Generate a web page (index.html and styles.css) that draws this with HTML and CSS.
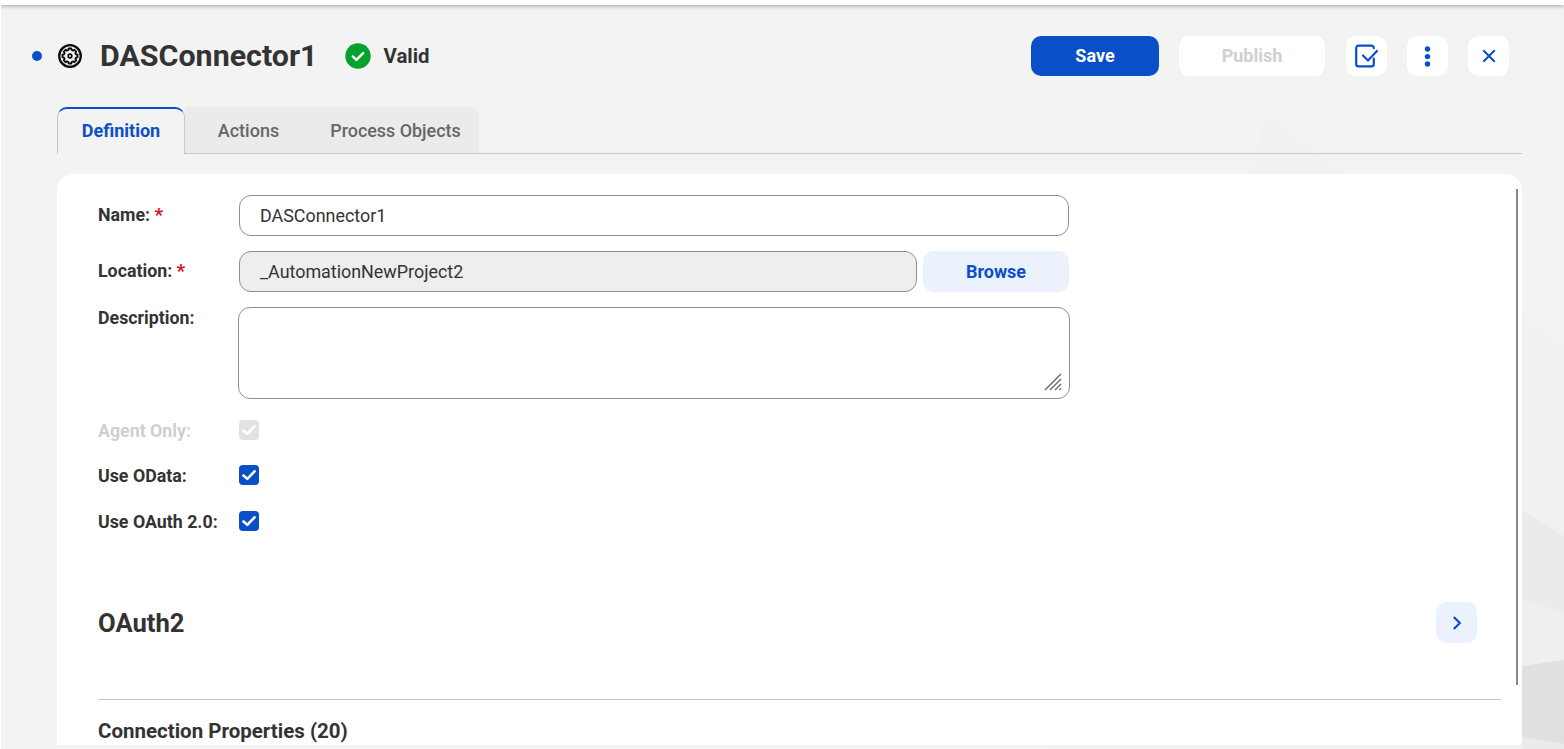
FILE: index.html
```html
<!DOCTYPE html>
<html lang="en">
<head>
<meta charset="utf-8">
<title>DASConnector1</title>
<link rel="stylesheet" href="styles.css">
</head>
<body>
<svg class="backdrop" viewBox="0 0 1564 749" width="1564" height="749" aria-hidden="true">
  <polygon points="1268,113 1564,347 1564,749 1049,749" fill="#f1f1f1"/>
  <polygon points="1522,510 1564,536 1564,613 1522,600" fill="#ebebeb"/>
  <polygon points="1522,600 1564,613 1564,660 1522,666" fill="#efefef"/>
  <polygon points="1522,666 1564,660 1564,744 1522,737" fill="#e0e0e0"/>
  <polygon points="1522,737 1564,744 1564,749 1522,749" fill="#ebebeb"/>
</svg>
<div class="edge-tab"></div>
<div class="page">
  <header class="header">
    <div class="title-group">
      <span class="dot"></span>
      <svg class="gear" viewBox="0 0 24 24" width="24" height="24" fill="none" stroke="#0c0c0c" aria-hidden="true">
        <circle cx="12" cy="12" r="10.800" stroke-width="2.300"/>
        <path stroke-width="1.900" stroke-linejoin="round" d="M10.700 6h2.600l.4 1.500 1.300.6 1.400-.8 1.800 1.800-.8 1.400.6 1.300 1.500.4v2.600l-1.500.4-.6 1.300.8 1.400-1.800 1.800-1.400-.8-1.300.6-.4 1.500h-2.600l-.4-1.500-1.300-.6-1.400.8-1.800-1.800.8-1.400-.6-1.300-1.500-.4v-2.600l1.500-.4.6-1.300-.8-1.400 1.800-1.800 1.400.8 1.300-.6z" transform="translate(0 -1.500)"/>
        <circle cx="12" cy="12" r="1.800" stroke-width="1.700"/>
      </svg>
      <h1 class="title">DASConnector1</h1>
      <svg class="valid-icon" viewBox="0 0 26 26" width="26" height="26" aria-hidden="true">
        <circle cx="13" cy="13" r="12.700" fill="#04a12e"/>
        <path d="M7.800 13.400l3.600 3.500 6.800-6.800" fill="none" stroke="#fff" stroke-width="2.400" stroke-linecap="round" stroke-linejoin="round"/>
      </svg>
      <span class="valid-text">Valid</span>
    </div>
    <div class="actions">
      <button class="btn btn-save">Save</button>
      <button class="btn btn-publish">Publish</button>
      <button class="btn-icon" aria-label="Validate">
        <svg viewBox="0 -1 24 24" width="24" height="24" fill="none" stroke="#0b4fc8" aria-hidden="true">
          <path stroke-width="2.200" stroke-linecap="round" d="M18.800 3.200V3a2.400 2.400 0 0 0-2.400-2.400H3.600A2.400 2.400 0 0 0 1.200 3v16a2.400 2.400 0 0 0 2.400 2.400h12.800a2.400 2.400 0 0 0 2.400-2.400v-5.500"/>
          <path stroke-width="2.200" stroke-linecap="round" stroke-linejoin="round" d="M8 10.500l5 5 9-9.500"/>
        </svg>
      </button>
      <button class="btn-icon" aria-label="More">
        <svg viewBox="0 0 24 24" width="24" height="24" fill="#0b4fc8" aria-hidden="true">
          <circle cx="11.500" cy="5" r="2.700"/><circle cx="11.500" cy="12.600" r="2.700"/><circle cx="11.500" cy="20" r="2.700"/>
        </svg>
      </button>
      <button class="btn-icon" aria-label="Close">
        <svg viewBox="0 0 24 24" width="24" height="24" fill="none" stroke="#0b4fc8" stroke-width="2" aria-hidden="true">
          <path d="M6.300 6.300l11.400 11.400M17.700 6.300L6.300 17.700"/>
        </svg>
      </button>
    </div>
  </header>

  <nav class="tabs">
    <a class="tab tab-active">Definition</a>
    <div class="tab-rest">
      <a class="tab tab-actions">Actions</a>
      <a class="tab tab-objects">Process Objects</a>
    </div>
  </nav>

  <main class="card">
    <div class="scrollbar"></div>
    <div class="form">
      <div class="row row-name">
        <label class="label">Name: <em>*</em></label>
        <div class="input">DASConnector1</div>
      </div>
      <div class="row row-location">
        <label class="label">Location: <em>*</em></label>
        <div class="input input-disabled">_AutomationNewProject2</div>
        <button class="btn-browse">Browse</button>
      </div>
      <div class="row row-desc">
        <label class="label">Description:</label>
        <div class="textarea">
          <svg class="grip" viewBox="0 0 18 18" width="18" height="18" fill="none" stroke="#666" stroke-width="1.400" aria-hidden="true">
            <path d="M1 17L17 1M6 17L17 6M11 17l6-6M15.500 17l1.500-1.500"/>
          </svg>
        </div>
      </div>
      <div class="row row-check row-agent">
        <label class="label label-muted">Agent Only:</label>
        <span class="check check-muted"><svg viewBox="0 0 20 20" width="20" height="20" aria-hidden="true"><path d="M4.500 10.500l3.800 3.400 7.200-7.600" fill="none" stroke="#fff" stroke-width="2.600" stroke-linecap="round" stroke-linejoin="round"/></svg></span>
      </div>
      <div class="row row-check row-odata">
        <label class="label">Use OData:</label>
        <span class="check"><svg viewBox="0 0 20 20" width="20" height="20" aria-hidden="true"><path d="M4.500 10.500l3.800 3.400 7.200-7.600" fill="none" stroke="#fff" stroke-width="2.600" stroke-linecap="round" stroke-linejoin="round"/></svg></span>
      </div>
      <div class="row row-check row-oauth">
        <label class="label">Use OAuth 2.0:</label>
        <span class="check"><svg viewBox="0 0 20 20" width="20" height="20" aria-hidden="true"><path d="M4.500 10.500l3.800 3.400 7.200-7.600" fill="none" stroke="#fff" stroke-width="2.600" stroke-linecap="round" stroke-linejoin="round"/></svg></span>
      </div>
    </div>
    <section class="section-head">
      <h2 class="section-title">OAuth2</h2>
      <button class="btn-expand" aria-label="Expand">
        <svg viewBox="0 0 24 24" width="24" height="24" fill="none" stroke="#0b4fc8" stroke-width="2.200" aria-hidden="true"><path d="M8.800 6l6 6-6 6"/></svg>
      </button>
    </section>
    <hr class="rule">
    <h3 class="props">Connection Properties (20)</h3>
  </main>
</div>
</body>
</html>
```
FILE: styles.css
```css
* { box-sizing: border-box; }
html, body { margin: 0; height: 100%; overflow: hidden; }
body {
  background: #f3f3f3;
  font-family: Roboto, "Liberation Sans", sans-serif;
  color: #333;
  border-left: 1px solid #fff;
  position: relative;
}
.backdrop { position: absolute; left: -1px; top: 0; }
.edge-tab {
  position: absolute;
  left: -1px;
  top: 380px;
  width: 1px;
  height: 52px;
  background: #e6eefb;
}
.page {
  position: relative;
  height: 749px;
  padding: 36px 42px 0 56px;
}
.page::before {
  content: "";
  position: absolute;
  left: -1px;
  top: 0;
  width: 1564px;
  height: 5px;
  background: #fff;
  box-shadow: 0 1px 4px rgba(0, 0, 0, .35);
}
.header {
  display: flex;
  justify-content: space-between;
  height: 40px;
  margin-left: -25px;
  margin-right: 13px;
}
.title-group { display: flex; align-items: center; }
.dot { width: 10px; height: 10px; border-radius: 50%; background: #0b4fc8; margin-right: 16px; }
.gear { margin-right: 18px; }
.title { margin: 0 27px 0 0; font-size: 30.400px; font-weight: 700; color: #333; line-height: 40px; }
.valid-icon { margin-right: 13px; }
.valid-text { font-size: 20.400px; font-weight: 700; }
.actions { display: flex; align-items: stretch; }
.btn {
  border: 0;
  border-radius: 10px;
  font: 700 18px Roboto, sans-serif;
  padding: 0 0 2px;
}
.btn-save { width: 128px; background: #0b4fc8; color: #fff; margin-right: 20px; }
.btn-publish { width: 146px; background: #fff; color: #d0d0d0; margin-right: 21px; }
.btn-icon {
  width: 41px;
  border: 0;
  padding: 0;
  border-radius: 10px;
  background: #fff;
  display: flex;
  align-items: center;
  justify-content: center;
  margin-right: 20px;
}
.btn-icon:last-child { margin-right: 0; }
.tabs {
  display: flex;
  height: 47px;
  margin-top: 31px;
  border-bottom: 1px solid #c8c8c8;
}
.tab {
  display: flex;
  align-items: center;
  justify-content: center;
  font-size: 18px;
  font-weight: 500;
  color: #666;
}
.tab-active {
  width: 128px;
  height: 47px;
  background: #f3f3f3;
  border: 1px solid #c8c8c8;
  border-bottom: 0;
  border-top: 2px solid #0b4fc8;
  border-radius: 10px 10px 0 0;
  color: #0b4fc8;
  font-weight: 700;
  padding-bottom: 2px;
  position: relative;
  z-index: 1;
}
.tab-rest {
  display: flex;
  background: #ebebeb;
  border-radius: 0 10px 0 0;
  height: 46px;
  width: 294px;
  padding-top: 1px;
}
.tab-actions { width: 127px; }
.tab-objects { width: 167px; font-size: 17.900px; }
.card {
  position: relative;
  margin-top: 20px;
  height: 571px;
  background: #fff;
  border-radius: 16px 16px 0 0;
  padding: 21px 21px 0 41px;
}
.scrollbar {
  position: absolute;
  right: 4px;
  top: 15px;
  width: 2px;
  height: 496px;
  background: #888;
}
.form { display: flex; flex-direction: column; width: 971px; }
.row { display: flex; align-items: flex-start; }
.label {
  width: 141px;
  flex: none;
  font-size: 17.800px;
  font-weight: 700;
  color: #333;
  line-height: 20px;
  padding-top: 10px;
}
.label em { color: #d9121f; font-style: normal; font-size: 19px; }
.input {
  flex: 1;
  height: 41px;
  border: 1px solid #8f8f8f;
  border-radius: 12px;
  padding-left: 20px;
  font-size: 17.900px;
  line-height: 39px;
  color: #333;
  background: #fff;
}
.input-disabled { background: #eeeeee; }
.row-location { margin-top: 15px; }
.btn-browse {
  width: 146px;
  height: 41px;
  margin-left: 6px;
  border: 0;
  border-radius: 10px;
  background: #ebf2fe;
  color: #0b4fc8;
  font: 700 18px Roboto, sans-serif;
}
.row-desc { margin-top: 15px; }
.row-desc .label { width: 140px; padding-top: 1px; }
.textarea {
  position: relative;
  flex: 1;
  height: 92px;
  border: 1px solid #8f8f8f;
  border-radius: 12px;
  margin-right: -1px;
}
.grip { position: absolute; right: 7px; bottom: 7px; }
.row-check { align-items: center; height: 20px; }
.row-check .label { padding-top: 2px; }
.row-agent { margin-top: 21px; }
.row-odata { margin-top: 25px; }
.row-oauth { margin-top: 26px; }
.label-muted { color: #cfcfcf; }
.check {
  width: 20px;
  height: 20px;
  border-radius: 4px;
  background: #0b4fc8;
  display: block;
}
.check svg { display: block; }
.check-muted { background: #e2e2e2; }
.section-head {
  display: flex;
  justify-content: space-between;
  align-items: center;
  height: 41px;
  margin-top: 71px;
  padding-right: 24px;
}
.section-title { margin: 0; font-size: 25.600px; font-weight: 700; color: #333; }
.btn-expand {
  width: 41px;
  height: 41px;
  border: 0;
  padding: 0;
  border-radius: 10px;
  background: #ebf2fe;
  display: flex;
  align-items: center;
  justify-content: center;
}
.rule { margin: 56px 0 0 0; border: 0; border-top: 1px solid #c8c8c8; }
.props { margin: 20px 0 0; font-size: 20.500px; font-weight: 700; line-height: 22px; color: #333; }
```
